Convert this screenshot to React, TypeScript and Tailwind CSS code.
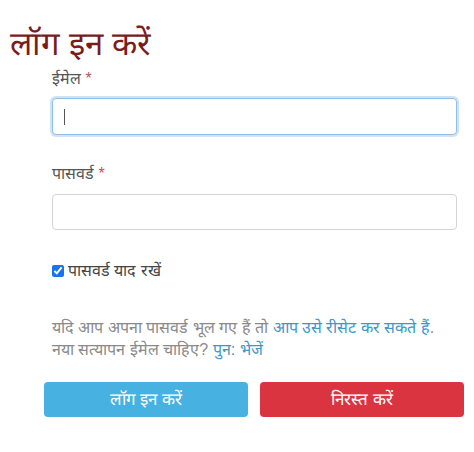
export default function App() {
  return (
    <div className="w-[474px] h-[452px] bg-white font-['Liberation_Sans',sans-serif] overflow-hidden">
      <h1 className="pl-[10px] pt-[22px] text-[33px] leading-[44px] text-[#7b1c1c]">लॉग इन करें</h1>

      <div className="ml-[52px] w-[405px]">
        <label className="block mt-[2px] text-[16px] leading-[22px] text-[#555]">
          ईमेल <span className="text-[#b55]">*</span>
        </label>
        <div className="mt-[8px] h-[37px] rounded-[4px] border border-[#8fbfe8] shadow-[0_0_0_2px_#cfe3f6] bg-white flex items-center pl-[11px]">
          <span className="w-px h-[16px] bg-[#555]" />
        </div>

        <label className="block mt-[28px] text-[16px] leading-[22px] text-[#555]">
          पासवर्ड <span className="text-[#b55]">*</span>
        </label>
        <div className="mt-[9px] h-[36px] rounded-[4px] border border-[#d4d4d4] bg-white" />

        <label className="mt-[30px] flex items-center gap-[4px] text-[16px] leading-[22px] text-[#444]">
          <input type="checkbox" defaultChecked className="w-[12px] h-[12px] m-0 accent-[#1a73e8]" />
          पासवर्ड याद रखें
        </label>

        <p className="mt-[35px] text-[16px] leading-[22px] text-[#8a8a8a]">
          यदि आप अपना पासवर्ड भूल गए हैं तो <a className="text-[#3e97c9]">आप उसे रीसेट कर सकते हैं</a>.
          <br />
          नया सत्यापन ईमेल चाहिए? <a className="text-[#3e97c9]">पुन: भेजें</a>
        </p>
      </div>

      <div className="ml-[44px] w-[420px] mt-[21px] flex gap-[12px]">
        <button className="flex-1 h-[35px] rounded-[4px] bg-[#47b1e2] text-white text-[17px]">लॉग इन करें</button>
        <button className="flex-1 h-[35px] rounded-[4px] bg-[#db3441] text-white text-[17px]">निरस्त करें</button>
      </div>
    </div>
  )
}
